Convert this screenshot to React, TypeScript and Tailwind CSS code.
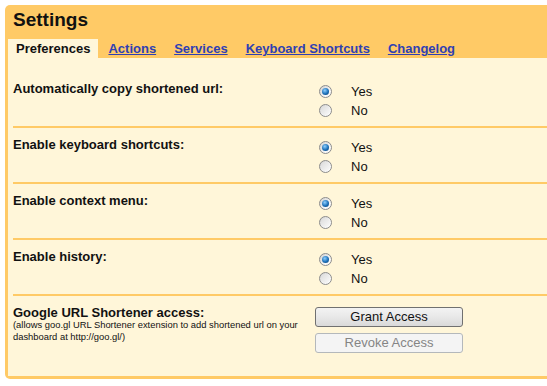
import React from "react";

function Radio({ checked }: { checked: boolean }) {
  return (
    <span className="relative flex w-[13px] h-[13px] shrink-0 items-center justify-center rounded-full border border-[#8c8c8c] bg-[linear-gradient(135deg,#d0d0d0,#f4f4f4_60%,#ffffff)]">
      {checked ? (
        <span className="block w-[7px] h-[7px] rounded-full bg-[radial-gradient(circle_at_40%_35%,#8fd0ff,#1b6fb8_55%,#0b3a6b)]" />
      ) : (
        <span className="block w-[9px] h-[9px] rounded-full bg-[linear-gradient(135deg,#dcdcdc,#fafafa)]" />
      )}
    </span>
  );
}

function RadioPair() {
  return (
    <div className="flex flex-col pt-[10px]">
      <label className="flex items-center h-[19px]">
        <Radio checked />
        <span className="ml-[19px] text-[13px] leading-[19px] text-[#111]">Yes</span>
      </label>
      <label className="flex items-center h-[19px]">
        <Radio checked={false} />
        <span className="ml-[19px] text-[13px] leading-[19px] text-[#111]">No</span>
      </label>
    </div>
  );
}

function Row({ label }: { label: string }) {
  return (
    <div className="flex h-[56px] border-b-2 border-[#ffca66]">
      <div className="w-[306px] pt-[9px] text-[13px] leading-[16px] font-bold text-[#111]">{label}</div>
      <RadioPair />
    </div>
  );
}

export default function App() {
  return (
    <div className="w-[547px] h-[386px] overflow-hidden bg-white pt-[5px] pl-[5px] font-['Liberation_Sans',Arial,sans-serif]">
      <div className="w-[570px] rounded-[5px] bg-[#ffca66] pl-[3px] pb-[3px]">
        <div className="pt-[4px]">
          <div className="pl-[5px] h-[22px] text-[19px] leading-[22px] font-bold text-[#111]">Settings</div>
          <div className="mt-[8px] flex gap-[2px] h-[19px] text-[13px] leading-[19px] font-bold">
            <div className="px-[8px] bg-[#fff6d9] text-[#111]">Preferences</div>
            <a className="px-[8px] text-[#2f3fb3] underline" href="#">Actions</a>
            <a className="px-[8px] text-[#2f3fb3] underline" href="#">Services</a>
            <a className="px-[8px] text-[#2f3fb3] underline" href="#">Keyboard Shortcuts</a>
            <a className="px-[8px] text-[#2f3fb3] underline" href="#">Changelog</a>
          </div>
        </div>
        <div className="bg-[#fff6d9] pl-[5px] pt-[14px]">
          <Row label="Automatically copy shortened url:" />
          <Row label="Enable keyboard shortcuts:" />
          <Row label="Enable context menu:" />
          <Row label="Enable history:" />
          <div className="flex h-[80px]">
            <div className="w-[302px] pt-[9px] text-[#111]">
              <div className="text-[13px] leading-[16px] font-bold">Google URL Shortener access:</div>
              <div className="mt-[-2px] text-[9.4px] leading-[12px]">
                (allows goo.gl URL Shortener extension to add shortened url on your
                <br />
                dashboard at http://goo.gl/)
              </div>
            </div>
            <div className="flex flex-col gap-[6px] pt-[11px]">
              <button className="w-[148px] h-[20px] rounded-[3px] border border-[#707070] bg-[linear-gradient(#f3f3f3,#e8e8e8_50%,#d9d9d9)] text-[13px] leading-[18px] text-[#111]">
                Grant Access
              </button>
              <button className="w-[148px] h-[20px] rounded-[3px] border border-[#b4b8bb] bg-[#f4f4f4] text-[13px] leading-[18px] text-[#858585]" disabled>
                Revoke Access
              </button>
            </div>
          </div>
        </div>
      </div>
    </div>
  );
}
